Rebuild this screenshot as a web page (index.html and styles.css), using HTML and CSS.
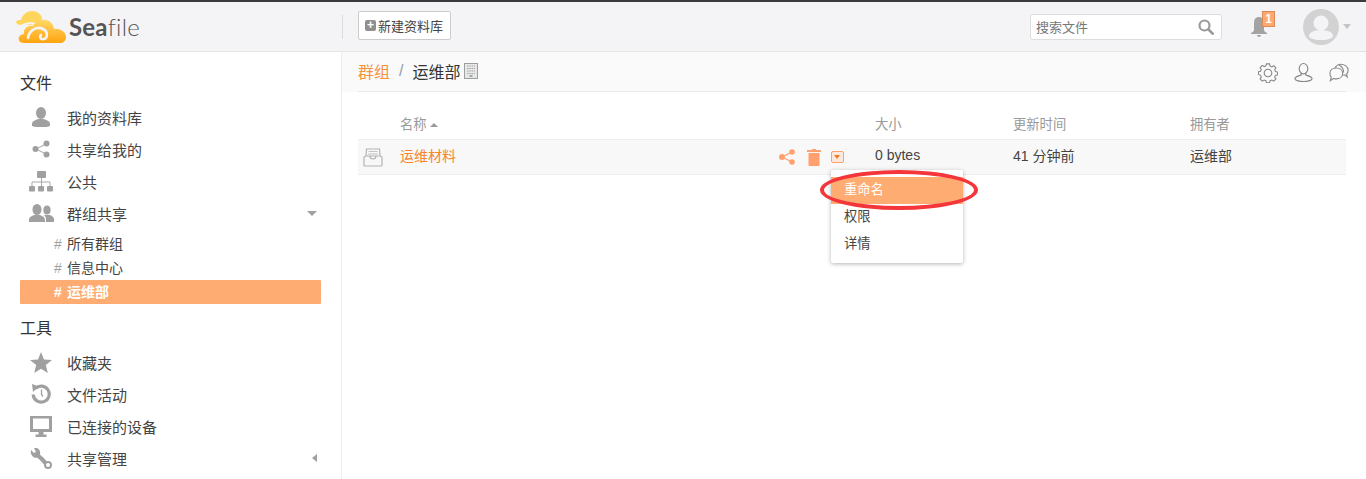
FILE: index.html
```html
<!DOCTYPE html>
<html>
<head>
    <meta charset="utf-8">
    <title>Seafile</title>
    <link rel="stylesheet" href="styles.css">
</head>
<body>
    <header class="top">
        <div class="logo">
            <svg class="logo-mark" width="50" height="32" viewBox="0 0 50 32">
                <defs>
                    <linearGradient id="cloud" x1="0" y1="0" x2="0" y2="1">
                        <stop offset="0" stop-color="#ffd866"/>
                        <stop offset="1" stop-color="#ffa30f"/>
                    </linearGradient>
                </defs>
                <path fill="#ffd65c" d="M0 11c1-2 3-2 5-2 1-5 6-9 11-9 6 0 10 4 10 8l-6 6H6c-3 0-6-1-6-3z"/>
                <path fill="none" stroke="#f4f4f6" stroke-width="2" d="M3 17c4-5 13-6 19-3"/>
                <path fill="url(#cloud)" d="M8 32c-4 0-6-3-5-6 1-2 3-3 5-3-1-4 3-9 9-8 2-4 7-7 12-6 5 0 8 4 9 9 6-1 12 3 12 8 0 4-3 6-7 6z"/>
                <path fill="none" stroke="#f4f4f6" stroke-width="2.600" stroke-linecap="round" d="M12 27c1-8 9-12 15-9 5 2 5 9 1 10-3 1-5-2-3-4"/>
            </svg>
            <span class="logo-text"><b>Sea</b>file</span>
        </div>
        <div class="top-left">
            <button class="add-btn"><span class="plus">+</span>新建资料库</button>
        </div>
        <div class="search">
            <span>搜索文件</span>
            <svg width="16" height="16" viewBox="0 0 16 16"><circle cx="6.500" cy="6.500" r="5" fill="none" stroke="#9a9a9a" stroke-width="2.200"/><path d="M10.500 10.500l4.200 4.200" stroke="#9a9a9a" stroke-width="2.600" stroke-linecap="round"/></svg>
        </div>
        <div class="bell">
            <svg width="18" height="22" viewBox="0 0 18 22"><path fill="#a3a3a3" d="M9 1c3 0 5 2 5 6v7c0 1 1 2 3 3v1H1v-1c2-1 3-2 3-3V7c0-4 2-6 5-6z"/><path fill="#a3a3a3" d="M7 19h4c0 1-1 2-2 2s-2-1-2-2z"/></svg>
            <span class="badge">1</span>
        </div>
        <div class="avatar">
            <svg width="36" height="36" viewBox="0 0 36 36"><circle cx="18" cy="18" r="18" fill="#d2d2d2"/><circle cx="18" cy="14" r="7.500" fill="#f4f4f6"/><path fill="#f4f4f6" d="M6 27c0-4 6-6 12-6s12 2 12 6c0 2-4 4-12 4S6 29 6 27z"/></svg>
        </div>
        <span class="caret"></span>
    </header>

    <div class="wrap">
        <aside class="side">
            <h3 class="side-title">文件</h3>
            <ul class="nav">
                <li><span class="ico"><svg width="18" height="20" viewBox="0 0 18 20"><ellipse cx="9" cy="6" rx="5" ry="6" fill="#a0a0a0"/><path fill="#a0a0a0" d="M0 17c0-3 4-4 6-5h6c2 1 6 2 6 5v2c-2 1-5 1-9 1s-7 0-9-1z"/></svg></span>我的资料库</li>
                <li><span class="ico"><svg width="18" height="18" viewBox="0 0 18 18"><path d="M4 9l10-5M4 9l10 5" stroke="#b5b5b5" stroke-width="1.200"/><circle cx="3.500" cy="9" r="3" fill="#a0a0a0"/><circle cx="14.500" cy="3.500" r="3" fill="#a0a0a0"/><circle cx="14.500" cy="14.500" r="3" fill="#a0a0a0"/></svg></span>共享给我的</li>
                <li><span class="ico"><svg width="24" height="22" viewBox="0 0 24 22"><rect x="8" y="1" width="9" height="7" rx="1" fill="#a0a0a0"/><path d="M12.500 8v8M3 16v-4h18v4" fill="none" stroke="#a8a8a8"/><rect x="0" y="16" width="6" height="5.500" rx="1" fill="#a0a0a0"/><rect x="9" y="16" width="6" height="5.500" rx="1" fill="#a0a0a0"/><rect x="18" y="16" width="6" height="5.500" rx="1" fill="#a0a0a0"/></svg></span>公共</li>
                <li><span class="ico"><svg width="25" height="19" viewBox="0 0 25 19"><ellipse cx="8" cy="5.500" rx="4.500" ry="5.500" fill="#a0a0a0"/><path fill="#a0a0a0" d="M0 16c0-3 3-4 5-5h6c2 1 5 2 5 5v2H0z"/><ellipse cx="18" cy="6" rx="3.600" ry="4.500" fill="#a0a0a0"/><path fill="#a0a0a0" d="M17 18v-3c0-2-1-3-2-4h6c2 1 4 2 4 4v3z"/></svg></span>群组共享<span class="tri-down"></span></li>
            </ul>
            <ul class="subnav">
                <li><span class="hash">#</span>所有群组</li>
                <li><span class="hash">#</span>信息中心</li>
                <li class="current"><span class="hash">#</span>运维部</li>
            </ul>
            <h3 class="side-title tools">工具</h3>
            <ul class="nav">
                <li><span class="ico"><svg width="22" height="21" viewBox="0 0 22 21"><path fill="#a0a0a0" d="M11 0l3 7.500 8 .6-6.200 5 2 7.900-6.800-4.300-6.800 4.300 2-7.900L0 8.100l8-.6z"/></svg></span>收藏夹</li>
                <li><span class="ico"><svg width="21" height="20" viewBox="0 0 21 20"><path fill="none" stroke="#a0a0a0" stroke-width="3.200" d="M4.500 4.500a8 8 0 1 1-2.300 6"/><path fill="#a0a0a0" d="M1 0l7 2.500L2 8z"/><path fill="none" stroke="#a0a0a0" stroke-width="1.300" d="M10.500 5.500v5l1.500 2"/></svg></span>文件活动</li>
                <li><span class="ico"><svg width="22" height="21" viewBox="0 0 22 21"><path fill="#a0a0a0" fill-rule="evenodd" d="M0 0h22v16H0zM3 2.500v10.500h16V2.500z"/><path fill="#a0a0a0" d="M8.500 16h5v2.500h3V21h-11v-2.500h3z"/></svg></span>已连接的设备</li>
                <li><span class="ico"><svg width="22" height="21" viewBox="0 0 22 21"><path fill="none" stroke="#a0a0a0" stroke-width="4" d="M5 5c3 3 8 6 11 11"/><path fill="#a0a0a0" d="M1 2l3 3 2-1-2-4c4-1 7 2 6 7L6 10C2 9 0 6 1 2z"/><circle cx="18" cy="17" r="3" fill="#fff" stroke="#a0a0a0" stroke-width="2"/></svg></span>共享管理<span class="tri-left"></span></li>
            </ul>
        </aside>

        <main class="main">
            <div class="crumb">
                <div class="crumb-path">
                    <a class="crumb-link">群组</a>
                    <span class="crumb-sep">/</span>
                    <span>运维部</span>
                    <svg class="crumb-ico" width="14" height="16" viewBox="0 0 14 16"><rect x=".5" y=".5" width="13" height="15" fill="#e8e8e8" stroke="#9aa0a0"/><path d="M3 3h8M3 5.500h8M3 8h8M3 10.500h8" stroke="#a5a5a5" stroke-dasharray="1.500 .8"/><path d="M5.500 13h3" stroke="#a5a5a5" stroke-width="2"/></svg>
                </div>
                <div class="crumb-tools">
                    <svg width="20" height="20" viewBox="0 0 22 22"><path fill="none" stroke="#888" stroke-width="1.200" d="M9.300 1h3.400l.6 2.500 1.900.8 2.200-1.300 2.300 2.400-1.300 2.100.8 1.900 2.300.6v3l-2.300.6-.8 1.900 1.300 2.100-2.300 2.400-2.200-1.300-1.900.8-.6 2.200H9.300l-.6-2.200-1.900-.8-2.200 1.300-2.300-2.400 1.300-2.100-.8-1.900L.5 12.600v-3l2.300-.6.8-1.900-1.300-2.100L4.600 2.600l2.200 1.300 1.900-.8z"/><circle cx="11" cy="11" r="4.200" fill="none" stroke="#888" stroke-width="1.200"/></svg>
                    <svg width="19" height="21" viewBox="0 0 20 21"><ellipse cx="10" cy="6.500" rx="4.500" ry="5.500" fill="none" stroke="#888" stroke-width="1.200"/><path fill="none" stroke="#888" stroke-width="1.200" d="M7.500 11c.5 1.500.5 2-1 2.500C3 14.500 1 15.500 1 17s4 3 9 3 9-1.500 9-3-2-2.500-5.500-3.500c-1.500-.5-1.500-1-1-2.500"/></svg>
                    <svg width="20" height="19" viewBox="0 0 22 20"><path fill="none" stroke="#888" stroke-width="1.200" d="M8 5c4 0 7 2.500 7 6s-3 6-7 6c-1 0-2 0-3-.5L1.500 19l1-4C1.500 14 1 12.500 1 11c0-3.500 3-6 7-6z"/><path fill="none" stroke="#888" stroke-width="1.200" d="M6.500 5C8 2.500 10.500 1 13 1c4 0 8 2.500 8 6.500 0 1.500-.5 3-1.500 4l.5 3.500-2.500-2.500-3 .5"/><path fill="none" stroke="#888" stroke-width="1.200" d="M11 2c3 1 5 3.500 5 8"/></svg>
                </div>
            </div>

            <div class="table">
                <div class="tr thead">
                    <span></span>
                    <span>名称<i class="sort"></i></span>
                    <span></span>
                    <span>大小</span>
                    <span>更新时间</span>
                    <span>拥有者</span>
                </div>
                <div class="tr row">
                    <svg width="20" height="19" viewBox="0 0 20 19"><path fill="none" stroke="#b3b3b3" stroke-width="1.200" d="M3.500 1h13l.5 7H3zM1 9l2-1h4c0 2 1 3 3 3s3-1 3-3h4l2 1v8a1 1 0 0 1-1 1H2a1 1 0 0 1-1-1z"/><path stroke="#c4c4c4" d="M5.500 3.500h9M5 6h10"/></svg>
                    <a class="lib-name cell">运维材料</a>
                    <div class="ops">
                        <svg class="ops-share" width="16" height="16" viewBox="0 0 16 16"><path d="M3 8l10-5M3 8l10 5" stroke="#ffa06e" stroke-width="1.300"/><circle cx="3" cy="8" r="3" fill="#ffa06e"/><circle cx="13" cy="3" r="2.800" fill="#ffa06e"/><circle cx="13" cy="13" r="2.800" fill="#ffa06e"/></svg>
                        <svg width="14" height="17" viewBox="0 0 14 17"><path fill="#ffa06e" d="M5 0h4v1h5v2H0V1h5zM1.500 4h11v12a1 1 0 0 1-1 1h-9a1 1 0 0 1-1-1z"/></svg>
                        <span class="ops-more"></span>
                    </div>
                    <span class="cell">0 bytes</span>
                    <span class="cell">41 分钟前</span>
                    <span class="cell">运维部</span>
                </div>
            </div>
        </main>
    </div>

    <ul class="menu">
        <li class="on">重命名</li>
        <li>权限</li>
        <li>详情</li>
    </ul>
    <div class="mark"></div>
</body>
</html>
```

FILE: styles.css
```css
* {
    box-sizing: border-box;
}
html, body {
    height: 100%;
}
body {
    margin: 0;
    overflow: hidden;
    display: flex;
    flex-direction: column;
    font-family: "Liberation Sans", "Noto Sans CJK SC", sans-serif;
    font-size: 14px;
    color: #333;
    background: #fff;
}
ul {
    list-style: none;
    margin: 0;
    padding: 0;
}

/* top bar */
.top {
    flex: none;
    height: 52px;
    display: flex;
    align-items: center;
    background: #f4f4f6;
    border-top: 2px solid #3a3a3a;
    border-bottom: 1px solid #e4e4e4;
}
.logo {
    width: 342px;
    height: 37px;
    padding-left: 16px;
    display: flex;
    align-items: center;
    gap: 3px;
}
.logo-mark {
    flex: none;
}
.logo-text {
    font-family: "Lato", sans-serif;
    font-size: 24px;
    font-weight: 300;
    color: #555;
    letter-spacing: .2px;
}
.logo-text b {
    font-weight: 700;
}
.top-left {
    flex: 1;
    height: 24px;
    padding-left: 15px;
    display: flex;
    align-items: center;
    border-left: 1px solid #ddd;
}
.add-btn {
    width: 93px;
    height: 29px;
    margin-bottom: 2px;
    padding: 0 0 0 6px;
    display: flex;
    align-items: center;
    gap: 2px;
    font: inherit;
    font-size: 13px;
    color: #444;
    background: #fff;
    border: 1px solid #ccc;
    border-radius: 2px;
}
.plus {
    width: 11px;
    height: 11px;
    font: bold 12px/10px "Liberation Sans", sans-serif;
    text-align: center;
    color: #fff;
    background: #8f8f8f;
    border-radius: 2px;
}
.search {
    width: 192px;
    height: 26px;
    padding: 0 7px 0 5px;
    display: flex;
    align-items: center;
    justify-content: space-between;
    font-size: 13px;
    color: #777;
    background: #fff;
    border: 1px solid #ddd;
    border-radius: 3px;
}
.bell {
    position: relative;
    width: 18px;
    height: 22px;
    margin-left: 28px;
}
.badge {
    position: absolute;
    top: -5px;
    left: 12px;
    width: 13px;
    height: 16px;
    font: bold 12px/14px "Liberation Sans", sans-serif;
    text-align: center;
    color: #fff;
    background: #ffa96f;
    border: 1px solid #d98c55;
}
.avatar {
    height: 36px;
    margin-left: 35px;
}
.caret {
    margin: 0 15px 0 4px;
    border: 4px solid transparent;
    border-top: 5px solid #c4c4c4;
    border-bottom: 0;
    width: 8px;
    height: 5px;
}

/* page body */
.wrap {
    flex: 1;
    display: flex;
    min-height: 0;
}
.side {
    flex: none;
    width: 342px;
    padding: 0 20px;
    border-right: 1px solid #eee;
}
.side-title {
    margin: 21px 0 6px;
    font-size: 16px;
    font-weight: normal;
    line-height: 22px;
    color: #333;
}
.side-title.tools {
    margin-top: 14px;
    margin-bottom: 6px;
}
.nav li {
    height: 32px;
    display: flex;
    align-items: center;
    font-size: 15px;
    color: #444;
}
.ico {
    flex: none;
    width: 47px;
    padding-right: 5px;
    display: flex;
    justify-content: center;
    height: 24px;
    align-items: center;
}
.tri-down {
    margin-left: auto;
    margin-right: 4px;
    border-left: 5px solid transparent;
    border-right: 5px solid transparent;
    border-top: 5px solid #a0a0a0;
}
.tri-left {
    margin-left: auto;
    margin-right: 4px;
    border-top: 4px solid transparent;
    border-bottom: 4px solid transparent;
    border-right: 5px solid #a0a0a0;
}
.subnav {
    margin-top: 3px;
}
.subnav li {
    height: 24px;
    line-height: 24px;
    padding-left: 34px;
    font-size: 14px;
    color: #444;
}
.hash {
    display: inline-block;
    width: 13px;
    color: #a0a0a0;
}
.subnav .current {
    color: #fff;
    font-weight: bold;
    background: #ffac73;
    border-radius: 1px;
}
.subnav .current .hash {
    color: #fff;
}

/* main column */
.main {
    flex: 1;
    min-width: 0;
}
.crumb {
    position: relative;
    height: 40px;
    padding: 0 17px 3px 16px;
    display: flex;
    align-items: center;
    justify-content: space-between;
    background: #fafafa;
}
.crumb::after {
    content: "";
    position: absolute;
    left: 16px;
    right: 20px;
    bottom: 0;
    height: 1px;
    background: #e8e8e8;
}
.crumb-path {
    display: flex;
    align-items: center;
    font-size: 16px;
    color: #333;
}
.crumb-link {
    color: #f7923c;
}
.crumb-sep {
    margin: 0 9px;
    color: #8c9bb0;
}
.crumb-ico {
    margin-left: 4px;
}
.crumb-tools {
    display: flex;
    align-items: center;
    gap: 16px;
    padding-top: 4px;
}
.table {
    margin: 0 20px 0 16px;
    padding-top: 15px;
}
.tr {
    display: grid;
    grid-template-columns: 42px 378px 97px 138px 177px 1fr;
    align-items: center;
}
.thead {
    height: 33px;
    font-size: 13.300px;
    color: #999;
    border-bottom: 1px solid #eee;
}
.sort {
    display: inline-block;
    margin-left: 3px;
    vertical-align: 2px;
    border-left: 4px solid transparent;
    border-right: 4px solid transparent;
    border-bottom: 4px solid #999;
}
.row {
    height: 35px;
    font-size: 14px;
    color: #444;
    background: #f8f8f8;
    border-bottom: 1px solid #eee;
}
.row svg {
    display: block;
}
.row > svg {
    margin-left: 5px;
}
.cell {
    margin-bottom: 4px;
}
.lib-name {
    color: #f7852b;
}
.ops {
    display: flex;
    align-items: center;
    gap: 10px;
    padding-left: 1px;
}
.ops-share {
    margin-right: 2px;
}
.ops-more {
    position: relative;
    width: 13px;
    height: 12px;
    border: 1px solid #ffa06e;
    border-radius: 2px;
    background: #fbe9dd;
}
.ops-more::after {
    content: "";
    position: absolute;
    top: 3px;
    left: 2px;
    border-left: 3.500px solid transparent;
    border-right: 3.500px solid transparent;
    border-top: 4px solid #f6791f;
}

/* dropdown and the red marker drawn over it */
.menu {
    position: absolute;
    top: 170px;
    left: 831px;
    width: 132px;
    height: 93px;
    padding-top: 7px;
    font-size: 13.300px;
    color: #444;
    background: #fff;
    border-radius: 2px;
    box-shadow: 0 1px 4px rgba(0,0,0,.3);
}
.menu li {
    height: 27px;
    line-height: 25px;
    padding-left: 13px;
}
.menu .on {
    color: #fff;
    background: #ffac73;
}
.mark {
    position: absolute;
    top: 170px;
    left: 820px;
    width: 158px;
    height: 40px;
    border: 4px solid #f4363a;
    border-radius: 50%;
}
```
